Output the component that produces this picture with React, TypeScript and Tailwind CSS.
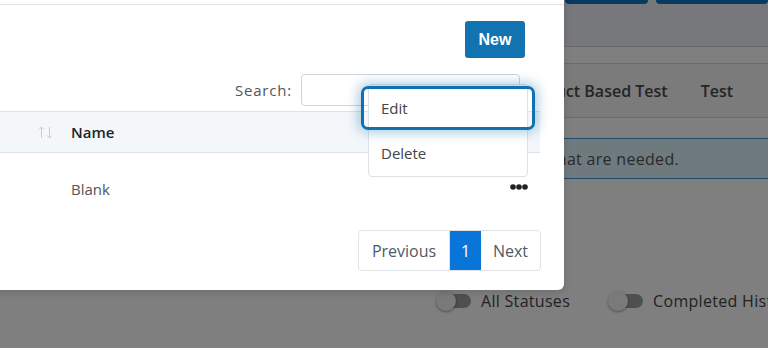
import React from 'react';

function SortIcon() {
  return (
    <svg width="15" height="13" viewBox="0 0 15 13" fill="none" stroke="#c9ccd0" strokeWidth="1">
      <path d="M3.5 1v11M1 3.5l2.5-2.5 2.5 2.5" />
      <path d="M11.5 1v11M9 9.5l2.5 2.5 2.5-2.5" />
    </svg>
  );
}

function Dots() {
  return (
    <svg width="18" height="6" viewBox="0 0 18 6" fill="#222">
      <circle cx="3" cy="3" r="2.8" />
      <circle cx="9" cy="3" r="2.8" />
      <circle cx="15" cy="3" r="2.8" />
    </svg>
  );
}

function Toggle({ label }: { label: string }) {
  return (
    <div className="flex shrink-0 items-center gap-[10px]">
      <div className="relative h-[20px] w-[35px] shrink-0">
        <div className="absolute left-[10px] top-[3px] h-[14px] w-[25px] rounded-full bg-[#9e9e9e]" />
        <div className="absolute left-0 top-0 h-[20px] w-[20px] rounded-full bg-[#f4f4f4] shadow-[0_1px_3px_rgba(0,0,0,0.4)]" />
      </div>
      <span className="whitespace-nowrap text-[16px] tracking-[0.3px] text-[#444]">{label}</span>
    </div>
  );
}

export default function App() {
  return (
    <div className="relative h-[348px] w-[768px] overflow-hidden bg-white font-['Open_Sans',sans-serif]">
      {/* Page behind the dialog */}
      <div className="flex flex-col">
        <div className="h-[47px] border-b border-[#d2d2d2] bg-[#eef0f6]">
          <div className="-mt-[30px] flex gap-[8px] pl-[565px]">
            <div className="h-[34px] w-[89px] rounded-b-[4px] bg-[#0c74bc]" />
            <div className="h-[34px] w-[120px] rounded-b-[4px] bg-[#0c74bc]" />
          </div>
        </div>
        <div className="h-[17px] border-b border-[#d6d6d6] bg-white" />
        <div className="flex h-[54px] items-center justify-end gap-[33px] border-b border-[#d6d6d6] bg-[#f6f6f6] pr-[35px] text-[16px] font-semibold text-[#4a4a4a]">
          <span className="whitespace-nowrap">Product Based Test</span>
          <span>Test</span>
        </div>
        <div className="h-[20px]" />
        <div className="flex h-[41px] items-center justify-end whitespace-nowrap border-y border-[#3a9fd8] bg-[#def4fc] pr-[89px] text-[16px] tracking-[0.3px] text-[#555]">
          Please select the tests that are needed.
        </div>
        <div className="mt-[110px] flex items-center gap-[38px] pl-[436px]">
          <Toggle label="All Statuses" />
          <Toggle label="Completed History" />
        </div>
      </div>

      {/* Overlay */}
      <div className="absolute inset-0 bg-black/50" />

      {/* Dialog */}
      <div className="absolute left-[-36px] top-[-60px] w-[600px] rounded-[6px] bg-white shadow-[0_2px_8px_rgba(0,0,0,0.15)]">
        <div className="h-[65px] border-b border-[#dee2e6]" />
        <div className="px-[24px] pb-[19px] pt-[16px]">
          <div className="flex justify-end pr-[15px]">
            <button className="h-[37px] w-[60px] rounded-[3px] bg-[#1173b0] font-['Liberation_Sans',sans-serif] text-[16px] font-bold text-white">
              New
            </button>
          </div>
          <div className="mt-[16px] flex items-center justify-end pr-[20px]">
            <span className="text-[15px] tracking-[0.8px] text-[#555]">Search:</span>
            <div className="ml-[9px] h-[32px] w-[219px] rounded-[4px] border border-[#ced4da]" />
          </div>
          <div className="mt-[5px]">
            <div className="flex h-[42px] items-center border-y border-[#dee2e6] bg-[#f4f7fa]">
              <div className="flex w-[71px] justify-end pr-[6px]">
                <SortIcon />
              </div>
              <div className="pl-[12px] text-[15px] font-semibold text-[#212529]">Name</div>
            </div>
            <div className="flex h-[72px] items-center">
              <div className="w-[71px]" />
              <div className="flex-1 pl-[12px] text-[15px] text-[#555]">Blank</div>
              <div className="pr-[12px] pb-[4px]">
                <Dots />
              </div>
            </div>
          </div>
          <div className="mt-[5px] flex justify-end">
            <div className="-mr-px flex h-[41px] overflow-hidden rounded-[4px] border border-[#dee2e6] text-[16px] text-[#505a66]">
              <div className="flex w-[91px] items-center justify-center border-r border-[#dee2e6]">Previous</div>
              <div className="flex w-[31px] items-center justify-center bg-[#0a75d8] text-white">1</div>
              <div className="flex w-[59px] items-center justify-center">Next</div>
            </div>
          </div>
        </div>
      </div>

      {/* Row actions dropdown */}
      <div className="absolute left-[368px] top-[84px] flex w-[160px] flex-col gap-[1px] rounded-[4px] border border-[#dee2e6] bg-white py-[1px] text-[15px] text-[#444]">
        <div className="relative flex h-[44px] items-center px-[12px]">
          <div className="absolute -left-[8px] -right-[8px] top-0 bottom-0 rounded-[7px] border-[3px] border-[#1170ad] shadow-[0_0_12px_3px_rgba(17,112,173,0.35)]" />
          <span className="relative">Edit</span>
        </div>
        <div className="flex h-[44px] items-center px-[12px]">Delete</div>
      </div>
    </div>
  );
}
